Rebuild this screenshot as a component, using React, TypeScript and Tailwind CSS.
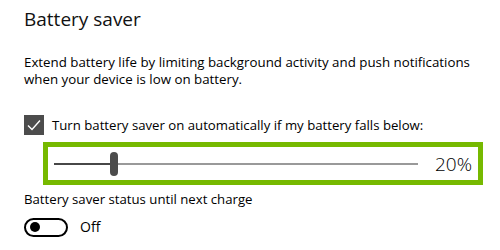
import React from "react";

const Check = () => (
  <svg width="14" height="12" viewBox="0 0 14 12" fill="none">
    <path d="M1 6.5 L5 10.5 L13 1.5" stroke="white" strokeWidth="1.4" />
  </svg>
);

export default function App() {
  const value = 20;
  return (
    <div
      className="w-[500px] h-[250px] overflow-hidden bg-white text-black flex flex-col pl-[24px]"
      style={{ fontFamily: '"Open Sans", "Noto Sans", sans-serif' }}
    >
      <h1 className="mt-[5px] text-[19px] leading-[28px] font-normal text-[#111]">Battery saver</h1>

      <p className="mt-[21px] text-[13.3px] leading-[17px] w-[470px]">
        Extend battery life by limiting background activity and push notifications when your device is low on battery.
      </p>

      <label className="mt-[27px] flex items-center gap-[8px]">
        <span className="w-[20px] h-[20px] bg-[#4c4c4c] flex items-center justify-center">
          <Check />
        </span>
        <span className="text-[13.2px] leading-[20px]">
          Turn battery saver on automatically if my battery falls below:
        </span>
      </label>

      <div className="mt-[7px] ml-[19px] w-[440px] h-[43px] border-[5px] border-[#76b900] flex items-center pl-[6px] pr-[6px]">
        <div className="relative w-[364px] h-[24px] flex items-center">
          <div className="h-[2px] w-[56px] bg-[#474747]" />
          <div className="h-[2px] flex-1 bg-[#999999]" />
          <div className="absolute left-[56px] top-0 w-[8px] h-[24px] rounded-full bg-[#4c4c4c]" />
        </div>
        <span className="ml-auto text-[19px] leading-[24px] font-light">{value}%</span>
      </div>

      <div className="mt-[5px] text-[13.2px] leading-[18px]">Battery saver status until next charge</div>

      <div className="mt-[9px] flex items-center gap-[12px]">
        <span className="w-[44px] h-[19px] rounded-full border-2 border-black flex items-center pl-[4px]">
          <span className="w-[10px] h-[10px] rounded-full bg-black" />
        </span>
        <span className="text-[14px] leading-[20px]">Off</span>
      </div>
    </div>
  );
}
